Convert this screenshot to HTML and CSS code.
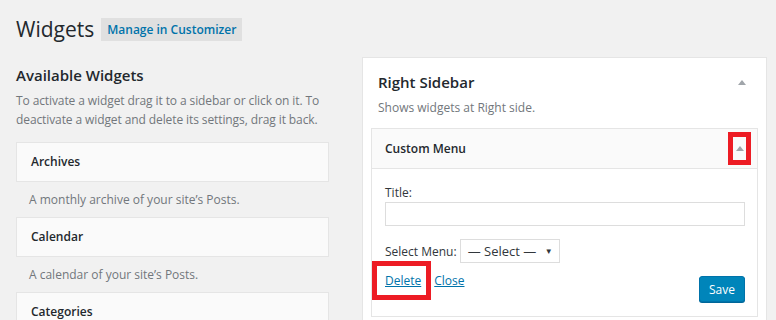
FILE: index.html
```html
<!DOCTYPE html>
<html lang="en">
<head>
  <meta charset="UTF-8" />
  <title>Widgets</title>
  <link rel="stylesheet" href="styles.css">
</head>
<body>
  <div class="wrap">
    <div class="page-head">
      <h1>Widgets</h1>
      <a class="page-action" href="#">Manage in Customizer</a>
    </div>

    <div class="columns">
      <div class="available">
        <h2>Available Widgets</h2>
        <p class="intro">To activate a widget drag it to a sidebar or click on it. To deactivate a widget and delete its settings, drag it back.</p>

        <div class="widget-item">Archives</div>
        <p class="widget-desc">A monthly archive of your site’s Posts.</p>

        <div class="widget-item">Calendar</div>
        <p class="widget-desc">A calendar of your site’s Posts.</p>

        <div class="widget-item">Categories</div>
      </div>

      <div class="sidebar">
        <div class="sidebar-name">
          <h2>Right Sidebar</h2>
          <svg class="toggle" width="8" height="5" viewBox="0 0 8 5"><polygon points="4,0 8,5 0,5" /></svg>
        </div>
        <p class="sidebar-desc">Shows widgets at Right side.</p>

        <div class="widget">
          <div class="widget-top">
            <span class="widget-title">Custom Menu</span>
            <span class="toggle-box marked">
              <svg class="toggle" width="8" height="5" viewBox="0 0 8 5"><polygon points="4,0 8,5 0,5" /></svg>
            </span>
          </div>
          <div class="widget-inside">
            <label class="field-label">Title:</label>
            <input class="text-input" type="text">

            <div class="menu-row">
              <span>Select Menu:</span>
              <div class="select">— Select —<span class="caret">▼</span></div>
            </div>

            <div class="widget-control">
              <div class="links">
                <span class="marked delete-box"><a href="#">Delete</a></span>
                <a href="#">Close</a>
              </div>
              <button class="btn-save">Save</button>
            </div>
          </div>
        </div>
      </div>
    </div>
  </div>
</body>
</html>
```

FILE: styles.css
```css
body {
  margin: 0;
  background: #f1f1f1;
  font-family: "Open Sans", sans-serif;
  font-size: 12px;
  color: #23282d;
}

.wrap {
  padding: 15px 9px 0 16px;
}

.page-head {
  display: flex;
  align-items: center;
  gap: 7px;
}

h1 {
  margin: 0;
  font-size: 21px;
  font-weight: 400;
  line-height: 29px;
}

.page-action {
  background: #e0e0e0;
  color: #0073aa;
  text-decoration: none;
  font-weight: 600;
  padding: 2px 6px;
  line-height: 19px;
}

.columns {
  display: flex;
  gap: 33px;
  margin-top: 13px;
}

.available {
  width: 313px;
}

h2 {
  margin: 0;
  font-size: 15px;
  font-weight: 600;
}

.available h2 {
  margin-top: 8px;
}

.intro {
  color: #72777c;
  line-height: 19px;
  letter-spacing: -0.1px;
  margin: 6px 0 13px;
}

.widget-item {
  background: #fafafa;
  border: 1px solid #e5e5e5;
  height: 38px;
  line-height: 38px;
  padding: 0 14px;
  font-weight: 600;
}

.widget-desc {
  color: #72777c;
  margin: 0;
  padding: 0 13px;
  line-height: 35px;
}

.sidebar {
  flex: 1;
  background: #fff;
  border: 1px solid #e5e5e5;
  padding: 0 8px;
}

.sidebar-name {
  display: flex;
  justify-content: space-between;
  align-items: center;
  padding: 14px 12px 0 7px;
}

.toggle {
  fill: #a0a5aa;
  display: block;
}

.sidebar-desc {
  color: #72777c;
  margin: 7px 0 12px 7px;
}

.widget {
  border: 1px solid #e5e5e5;
}

.widget-top {
  display: flex;
  justify-content: space-between;
  align-items: center;
  height: 39px;
  background: #fafafa;
  border-bottom: 1px solid #e5e5e5;
  padding-left: 13px;
  font-weight: 600;
}

.toggle-box {
  width: 13px;
  height: 23px;
  display: flex;
  align-items: center;
  justify-content: center;
  margin-right: 6px;
}

.marked {
  border: 5px solid #ed1c24;
}

.widget-inside {
  padding: 17px 12px 14px 13px;
}

.field-label {
  display: block;
  line-height: 14px;
  color: #32373c;
}

.text-input {
  display: block;
  box-sizing: border-box;
  width: 100%;
  height: 24px;
  margin: 2px 0 13px;
  border: 1px solid #ddd;
}

.menu-row {
  display: flex;
  align-items: center;
  gap: 3px;
  color: #32373c;
}

.select {
  position: relative;
  box-sizing: border-box;
  width: 100px;
  height: 24px;
  line-height: 22px;
  border: 1px solid #ddd;
  padding-left: 7px;
  font-size: 13px;
}

.caret {
  position: absolute;
  right: 6px;
  top: 0;
  font-size: 8px;
}

.widget-control {
  display: flex;
  justify-content: space-between;
  align-items: flex-end;
  margin-top: -2px;
}

.links {
  display: flex;
  align-items: center;
  gap: 3px;
  margin: 0 0 2px -13px;
}

.links a {
  color: #0073aa;
}

.delete-box {
  padding: 5px 5px 5px 8px;
  line-height: 19px;
}

.btn-save {
  background: #0085ba;
  border: 1px solid #0073aa;
  box-shadow: 0 1px 0 #006799;
  border-radius: 3px;
  color: #fff;
  font-family: inherit;
  font-size: 12px;
  height: 26px;
  padding: 0 9px;
}
```
